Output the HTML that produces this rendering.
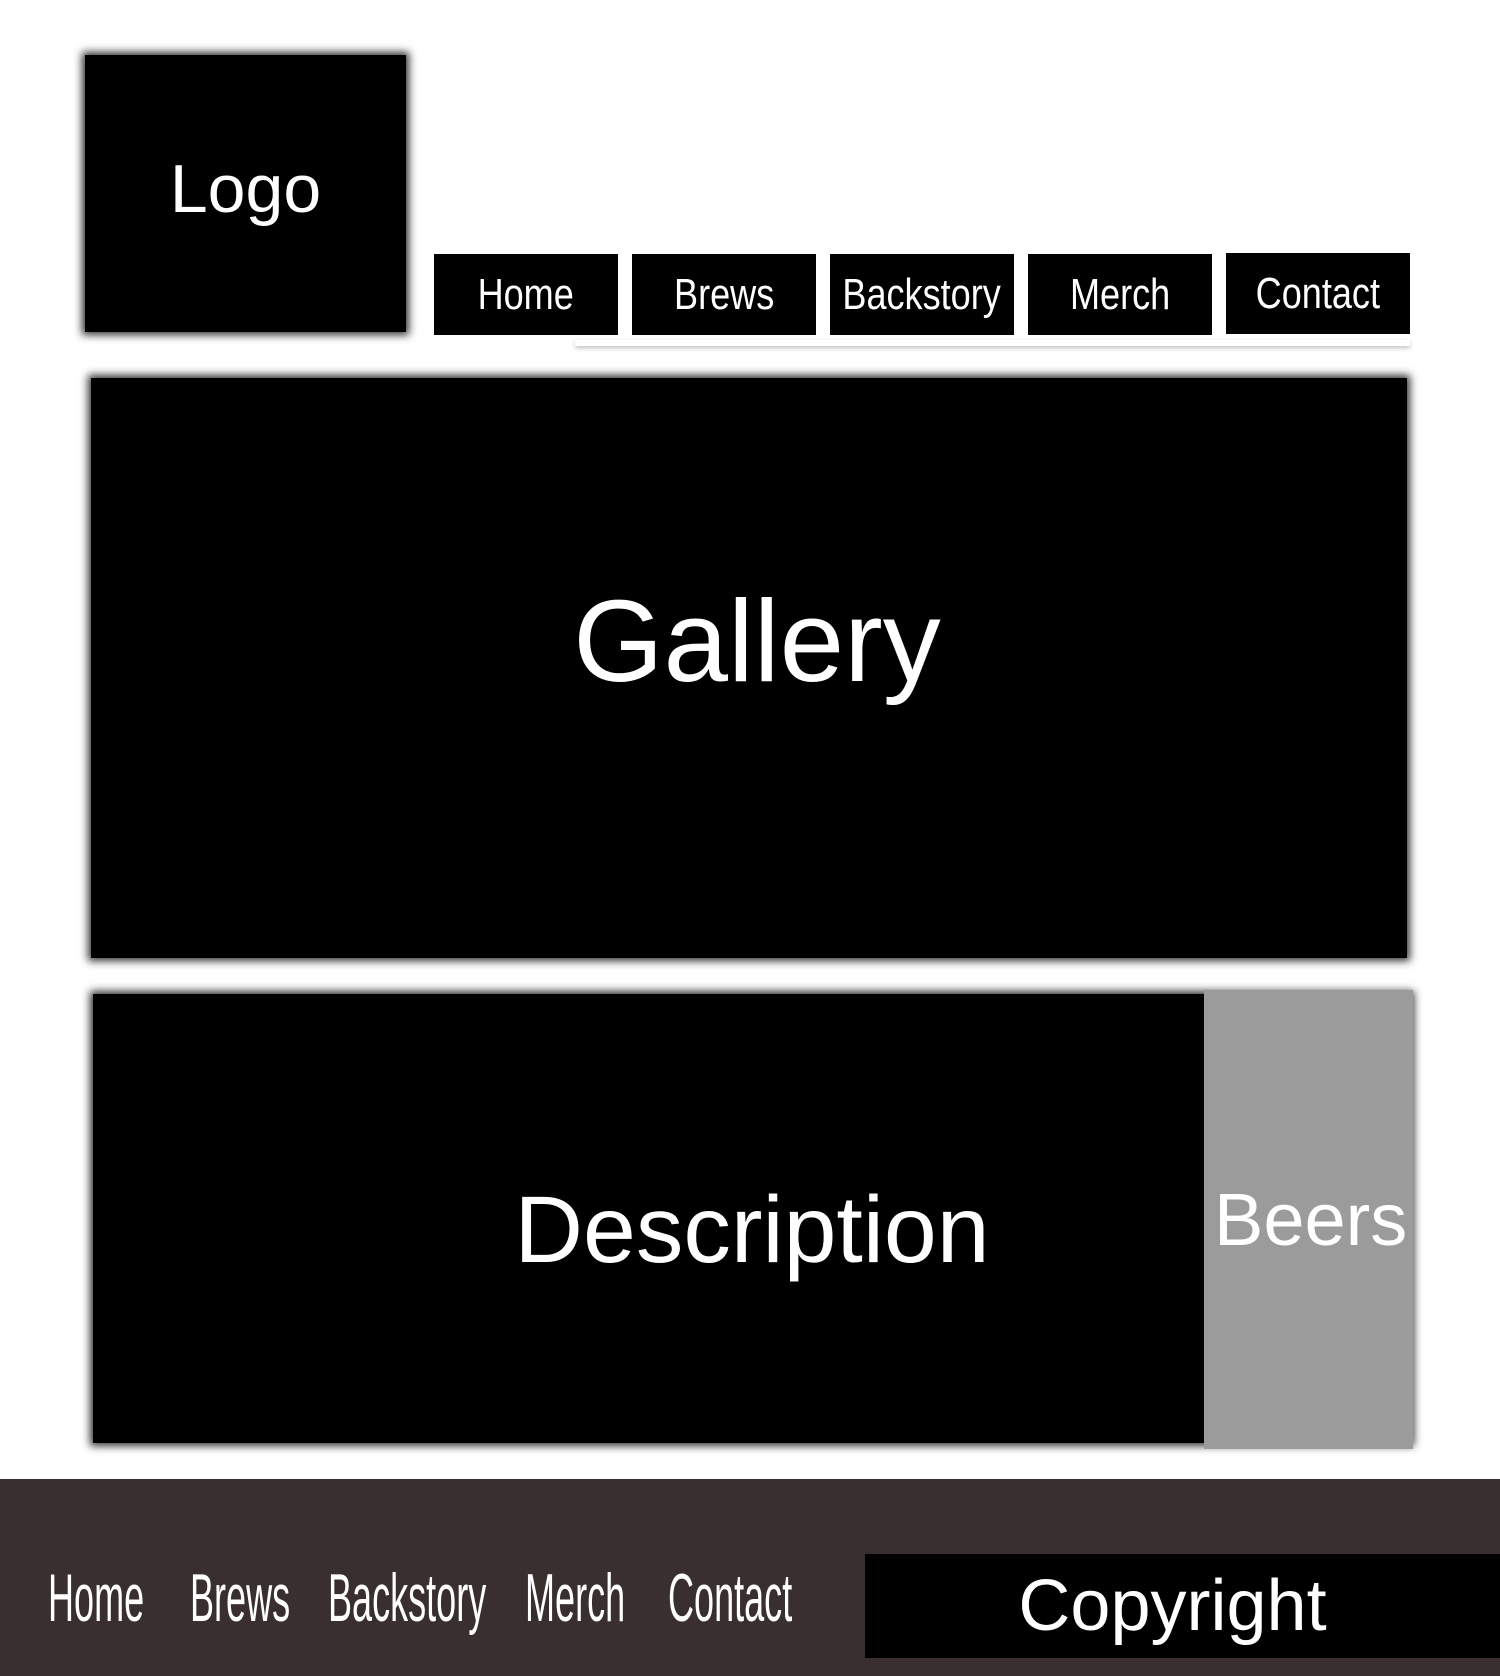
<!DOCTYPE html>
<html><head><meta charset="utf-8"><style>
*{margin:0;padding:0;box-sizing:border-box}
body{width:1500px;height:1676px;background:#fff;position:relative;overflow:hidden;font-family:"Liberation Sans","DejaVu Sans",sans-serif;color:#fff}
.a{position:absolute}
.box{background:#000;box-shadow:0 0 8px 3px rgba(0,0,0,.8)}
.nav{background:#000;top:254px;height:81px;width:184px;display:flex;align-items:center;justify-content:center;font-size:44px}
.nav span,.fl span{display:inline-block;transform:scaleX(.82);white-space:nowrap}
.c{display:flex;align-items:center;justify-content:center}
.fl{top:1560px;font-size:68px;height:76px;line-height:76px}
.fl span{transform:scaleX(.53);transform-origin:left center}
</style></head><body>
<div class="a box c" style="left:85px;top:55px;width:321px;height:277px;font-size:68px;padding-bottom:10px">Logo</div>
<div class="a" style="left:575px;top:340px;width:835px;height:6px;box-shadow:0 2px 5px rgba(0,0,0,.25)"></div>
<div class="a nav" style="left:434px"><span>Home</span></div>
<div class="a nav" style="left:632px"><span>Brews</span></div>
<div class="a nav" style="left:830px"><span>Backstory</span></div>
<div class="a nav" style="left:1028px"><span>Merch</span></div>
<div class="a nav" style="left:1226px;top:253px"><span>Contact</span></div>
<div class="a box c" style="left:91px;top:378px;width:1316px;height:580px;font-size:116px;padding-bottom:54px;padding-left:16px">Gallery</div>
<div class="a box" style="left:93px;top:994px;width:1318px;height:449px"></div>
<div class="a c" style="left:93px;top:994px;width:1318px;height:449px;font-size:95px;padding-top:24px">Description</div>
<div class="a" style="left:1204px;top:990px;width:209px;height:459px;background:#9b9b9b;font-size:74px;line-height:459px;padding-left:10px;white-space:nowrap">Beers</div>
<div class="a" style="left:0;top:1479px;width:1500px;height:197px;background:#382f2e"></div>
<div class="a fl" style="left:48px"><span>Home</span></div>
<div class="a fl" style="left:190px"><span>Brews</span></div>
<div class="a fl" style="left:328px"><span>Backstory</span></div>
<div class="a fl" style="left:525px"><span>Merch</span></div>
<div class="a fl" style="left:668px"><span>Contact</span></div>
<div class="a c" style="left:865px;top:1554px;width:635px;height:104px;background:#000;font-size:72px;padding-right:20px">Copyright</div>
</body></html>
